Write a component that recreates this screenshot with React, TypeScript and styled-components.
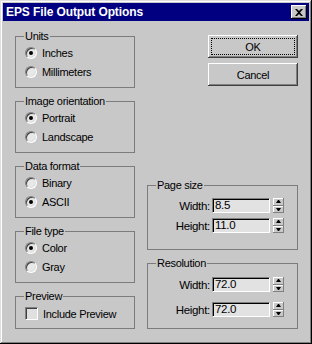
import React from 'react';
import styled, { createGlobalStyle } from 'styled-components';

const FACE = '#c8c8c8';

const GlobalStyle = createGlobalStyle`
  html, body {
    margin: 0;
    padding: 0;
    background: ${FACE};
  }
  body {
    font-family: "Liberation Sans", Arial, sans-serif;
    font-size: 11px;
    letter-spacing: -0.3px;
    color: #000;
  }
`;

const Window = styled.div`
  width: 312px;
  height: 344px;
  box-sizing: border-box;
  padding: 3px;
  background: ${FACE};
  display: flex;
  flex-direction: column;
  box-shadow: inset -1px -1px #000, inset 1px 1px #dfdfdf, inset -2px -2px #808080,
    inset 2px 2px #fff;
`;

const TitleBar = styled.div`
  height: 18px;
  flex: none;
  background: #000080;
  display: flex;
  align-items: center;
  justify-content: space-between;
  padding: 0 2px 0 3px;
`;

const Title = styled.span`
  color: #fff;
  font-weight: bold;
  font-size: 12px;
  letter-spacing: -0.1px;
`;

const CloseButton = styled.div`
  width: 16px;
  height: 14px;
  background: ${FACE};
  display: flex;
  align-items: center;
  justify-content: center;
  box-shadow: inset -1px -1px #000, inset 1px 1px #fff, inset -2px -2px #808080;
`;

const Body = styled.div`
  flex: 1;
  display: flex;
  gap: 12px;
  padding: 9px 11px 0 12px;
`;

const LeftColumn = styled.div`
  width: 120px;
  display: flex;
  flex-direction: column;
  gap: 7px;
`;

const RightColumn = styled.div`
  flex: 1;
  display: flex;
  flex-direction: column;
  height: 299px;
`;

const Group = styled.fieldset<{ $pt?: number; $pb?: number; $pr?: number; $gap?: number }>`
  margin: 0;
  min-width: 0;
  border: 1px solid #7c7c7c;
  padding: ${(p) => p.$pt ?? 0}px ${(p) => p.$pr ?? 0}px ${(p) => p.$pb ?? 6}px 9px;
  display: flex;
  flex-direction: column;
  gap: ${(p) => p.$gap ?? 0}px;
`;

const Legend = styled.legend`
  padding: 0 1px;
  margin-left: -1px;
  line-height: 13px;
`;

const OptionRow = styled.label`
  height: 19px;
  display: flex;
  align-items: center;
  gap: 5px;
`;

const Radio = styled.span<{ $checked?: boolean }>`
  width: 12px;
  height: 12px;
  box-sizing: border-box;
  border-radius: 50%;
  border: 1px solid;
  border-color: #808080 #fff #fff #808080;
  background: #e8e8e8;
  box-shadow: inset 1px 1px #404040, inset -1px -1px #dfdfdf;
  display: flex;
  align-items: center;
  justify-content: center;

  &::after {
    content: '';
    width: 4px;
    height: 4px;
    border-radius: 50%;
    background: #000;
    display: ${(p) => (p.$checked ? 'block' : 'none')};
  }
`;

const Checkbox = styled.span`
  width: 13px;
  height: 13px;
  box-sizing: border-box;
  border: 1px solid;
  border-color: #808080 #fff #fff #808080;
  background: #e0e0e0;
  box-shadow: inset 1px 1px #404040, inset -1px -1px #dfdfdf;
`;

const ButtonStack = styled.div`
  display: flex;
  flex-direction: column;
  align-items: flex-end;
  gap: 5px;
  padding-top: 5px;
`;

const PushButton = styled.button<{ $focused?: boolean }>`
  width: 90px;
  height: 23px;
  border: none;
  background: ${FACE};
  font: inherit;
  letter-spacing: inherit;
  color: #000;
  padding: 0;
  box-shadow: inset -1px -1px #404040, inset 1px 1px #fff, inset -2px -2px #808080;
  outline: ${(p) => (p.$focused ? '1px dotted #000' : 'none')};
  outline-offset: -4px;
`;

const Groups = styled.div`
  margin-top: auto;
  display: flex;
  flex-direction: column;
  gap: 7px;
`;

const FieldRow = styled.div`
  height: 15px;
  display: flex;
  align-items: center;
  justify-content: flex-end;
`;

const FieldLabel = styled.span`
  font-size: 11.5px;
  margin-right: 2px;
`;

const Field = styled.div`
  width: 58px;
  height: 15px;
  box-sizing: border-box;
  background: #e2e2e2;
  border: 1px solid;
  border-color: #808080 #fff #fff #808080;
  box-shadow: inset 1px 1px #000;
  padding: 0 0 0 2px;
  line-height: 13px;
  font-size: 11.5px;
`;

const Spinner = styled.div`
  width: 11px;
  height: 15px;
  margin-left: 3px;
  display: flex;
  flex-direction: column;
`;

const SpinHalf = styled.div<{ $down?: boolean }>`
  flex: 1;
  background: ${FACE};
  display: flex;
  align-items: center;
  justify-content: center;
  box-shadow: inset -1px -1px #808080, inset 1px 1px #fff;

  &::after {
    content: '';
    width: 1px;
    height: 0;
    border-left: 2px solid transparent;
    border-right: 2px solid transparent;
    ${(p) =>
      p.$down ? 'border-top: 3px solid #000;' : 'border-bottom: 3px solid #000;'}
  }
`;

interface ValueRowProps {
  label: string;
  value: string;
}

const ValueRow: React.FC<ValueRowProps> = ({ label, value }) => (
  <FieldRow>
    <FieldLabel>{label}</FieldLabel>
    <Field>{value}</Field>
    <Spinner>
      <SpinHalf />
      <SpinHalf $down />
    </Spinner>
  </FieldRow>
);

interface RadioGroupProps {
  title: string;
  options: string[];
  selected: string;
}

const RadioGroup: React.FC<RadioGroupProps> = ({ title, options, selected }) => (
  <Group $pt={0} $pb={6}>
    <Legend>{title}</Legend>
    {options.map((o) => (
      <OptionRow key={o}>
        <Radio $checked={o === selected} />
        {o}
      </OptionRow>
    ))}
  </Group>
);

const App: React.FC = () => {
  return (
    <>
      <GlobalStyle />
      <Window>
        <TitleBar>
          <Title>EPS File Output Options</Title>
          <CloseButton>
            <svg width="8" height="7" viewBox="0 0 8 7">
              <path d="M0 0h2l2 2 2-2h2L5 3.5 8 7H6L4 5 2 7H0l3-3.5z" fill="#000" />
            </svg>
          </CloseButton>
        </TitleBar>
        <Body>
          <LeftColumn>
            <RadioGroup title="Units" options={['Inches', 'Millimeters']} selected="Inches" />
            <RadioGroup
              title="Image orientation"
              options={['Portrait', 'Landscape']}
              selected="Portrait"
            />
            <RadioGroup title="Data format" options={['Binary', 'ASCII']} selected="ASCII" />
            <RadioGroup title="File type" options={['Color', 'Gray']} selected="Color" />
            <Group $pt={1} $pb={5}>
              <Legend>Preview</Legend>
              <OptionRow>
                <Checkbox />
                Include Preview
              </OptionRow>
            </Group>
          </LeftColumn>
          <RightColumn>
            <ButtonStack>
              <PushButton $focused>OK</PushButton>
              <PushButton>Cancel</PushButton>
            </ButtonStack>
            <Groups>
              <Group $pt={6} $pb={16} $pr={13} $gap={5}>
                <Legend>Page size</Legend>
                <ValueRow label="Width:" value="8.5" />
                <ValueRow label="Height:" value="11.0" />
              </Group>
              <Group $pt={7} $pb={11} $pr={13} $gap={10}>
                <Legend>Resolution</Legend>
                <ValueRow label="Width:" value="72.0" />
                <ValueRow label="Height:" value="72.0" />
              </Group>
            </Groups>
          </RightColumn>
        </Body>
      </Window>
    </>
  );
};

export default App;
